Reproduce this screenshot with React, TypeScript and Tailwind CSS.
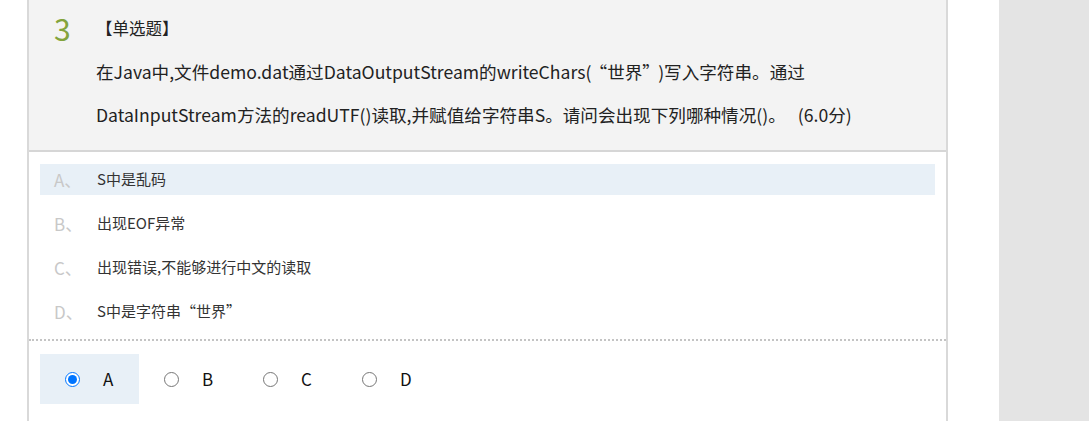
import React from "react";

const font = { fontFamily: '"Noto Sans CJK SC", "Noto Sans", sans-serif' };

const options = [
  { k: "A", t: "S中是乱码" },
  { k: "B", t: "出现EOF异常" },
  { k: "C", t: "出现错误,不能够进行中文的读取" },
  { k: "D", t: "S中是字符串“世界”" },
];

export default function App() {
  return (
    <div className="flex h-[421px] w-[1089px] overflow-hidden bg-white" style={font}>
      <div className="w-[27px] shrink-0" />
      <div className="flex w-[921px] shrink-0 flex-col border-x-2 border-[#d9d9d9]">
        <div className="h-[152px] shrink-0 border-b-2 border-[#d6d6d6] bg-[#f3f3f3]">
          <div className="flex items-start pt-[10px]">
            <div className="w-[67px] pl-[25px] text-[30px] leading-[36px] text-[#83a43c]">3</div>
            <div className="pt-[2px] text-[16.5px] leading-[32px] text-[#222]">【单选题】</div>
          </div>
          <div className="pl-[67px] pt-[4px] text-[17.6px] leading-[43px] text-[#222]">
            <div>
              在Java中,文件demo.dat通过DataOutputStream的writeChars(<span className="px-[7px]">“世界”</span>)写入字符串。通过
            </div>
            <div>
              DataInputStream方法的readUTF()读取,并赋值给字符串S。请问会出现下列哪种情况()。<span className="pl-[12px]">(6.0分)</span>
            </div>
          </div>
        </div>
        <div className="flex flex-col gap-[13px] px-[11px] pb-[12px] pt-[12px]">
          {options.map((o, i) => (
            <div
              key={o.k}
              className={`flex h-[31px] items-center ${i === 0 ? "bg-[#e8f0f7]" : ""}`}
            >
              <span className="w-[57px] pl-[14px] text-[17px] text-[#c8c8c8]">{o.k}、</span>
              <span className="text-[15px] text-[#333]">{o.t}</span>
            </div>
          ))}
        </div>
        <div className="border-t-2 border-dotted border-[#c4c4c4]" />
        <div className="flex px-[11px] pt-[13px]">
          {options.map((o, i) => (
            <label
              key={o.k}
              className={`flex h-[50px] w-[99px] items-center ${i === 0 ? "bg-[#e8f0f7]" : ""}`}
            >
              <input
                type="radio"
                name="ans"
                defaultChecked={i === 0}
                className="ml-[25px] h-[15px] w-[15px]"
              />
              <span className="ml-[23px] text-[17px] text-[#111]">{o.k}</span>
            </label>
          ))}
        </div>
      </div>
      <div className="w-[51px] shrink-0" />
      <div className="flex-1 bg-[#e4e4e4]" />
    </div>
  );
}
